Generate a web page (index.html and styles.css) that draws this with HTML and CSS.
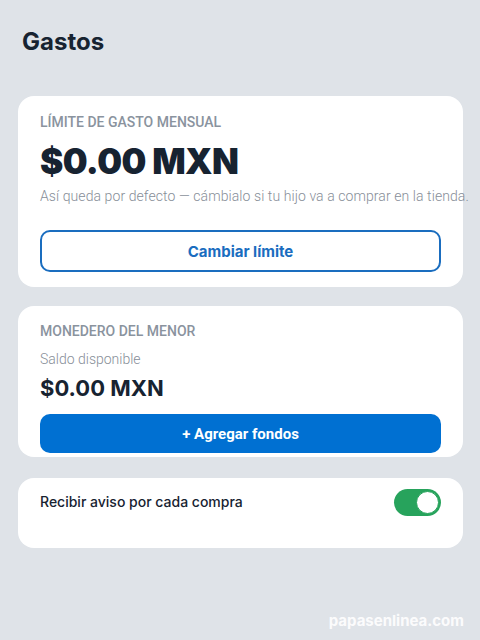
FILE: index.html
```html
<!DOCTYPE html>
<html lang="es">
<head>
    <meta charset="UTF-8">
    <meta name="viewport" content="width=device-width, initial-scale=1.0">
    <title>Gastos</title>
    <link rel="stylesheet" href="styles.css">
</head>
<body>

    <h1 class="page-title">Gastos</h1>

    <!-- Limite mensual -->
    <section class="card card-limit">
        <div class="card-label">LÍMITE DE GASTO MENSUAL</div>
        <div class="amount-big">$0.00 MXN</div>
        <p class="hint">Así queda por defecto — cámbialo si tu hijo va a comprar en la tienda.</p>
        <button class="btn btn-outline">Cambiar límite</button>
    </section>

    <!-- Monedero -->
    <section class="card card-wallet">
        <div class="card-label">MONEDERO DEL MENOR</div>
        <div class="sub-label">Saldo disponible</div>
        <div class="amount">$0.00 MXN</div>
        <button class="btn btn-fill">+ Agregar fondos</button>
    </section>

    <!-- Aviso -->
    <section class="card card-notify">
        <span class="notify-text">Recibir aviso por cada compra</span>
        <span class="toggle on"><span class="knob"></span></span>
    </section>

    <div class="watermark">papasenlinea.com</div>

</body>
</html>
```

FILE: styles.css
```css
body {
    margin: 0;
    padding: 26px 17px 20px 18px;
    background: #dfe3e8;
    font-family: 'Inter', 'Roboto', sans-serif;
    color: #172331;
    height: 640px;
    box-sizing: border-box;
    position: relative;
    overflow: hidden;
}

.page-title {
    font-size: 24px;
    line-height: 32px;
    font-weight: 700;
    margin: 0 0 38px 4px;
    color: #172331;
}

.card {
    background: white;
    border-radius: 16px;
    padding: 17px 22px 15px;
    display: flex;
    flex-direction: column;
}

.card + .card {
    margin-top: 19px;
}

.card-label {
    font-family: 'Roboto', sans-serif;
    font-weight: 500;
    font-size: 14px;
    line-height: 18px;
    color: #8a939e;
}

.amount-big {
    margin-top: 10px;
    font-size: 35px;
    line-height: 40px;
    font-weight: 900;
    letter-spacing: -0.6px;
    color: #172331;
}

.hint {
    margin: 6px -40px 0 0;
    font-family: 'Roboto', sans-serif;
    font-weight: 300;
    font-size: 14px;
    line-height: 18px;
    letter-spacing: 0.08px;
    color: #878e98;
    white-space: nowrap;
}

.btn {
    height: 42px;
    border-radius: 10px;
    font-size: 15px;
    cursor: pointer;
    width: 100%;
}

.btn-outline {
    margin-top: 25px;
    background: white;
    border: 2px solid #1a6dbf;
    color: #1a6dbf;
    font-family: 'Inter', sans-serif;
    font-weight: 700;
}

/* Monedero */
.card-wallet {
    padding-top: 16px;
    padding-bottom: 4px;
}

.sub-label {
    margin-top: 10px;
    font-family: 'Roboto', sans-serif;
    font-weight: 300;
    font-size: 14px;
    line-height: 18px;
    color: #878e98;
}

.amount {
    margin-top: 6px;
    font-size: 22px;
    line-height: 28px;
    font-weight: 700;
    color: #172331;
}

.btn-fill {
    margin-top: 12px;
    height: 39px;
    background: #0070d2;
    border: none;
    color: white;
    font-family: 'Roboto', sans-serif;
    font-weight: 700;
}

/* Aviso */
.card-notify {
    flex-direction: row;
    justify-content: space-between;
    align-items: flex-start;
    padding: 11px 22px;
    min-height: 70px;
    box-sizing: border-box;
}

.card + .card-notify {
    margin-top: 21px;
}

.notify-text {
    font-size: 14px;
    line-height: 20px;
    font-weight: 500;
    color: #172331;
    margin-top: 3px;
}

.toggle {
    width: 47px;
    height: 27px;
    border-radius: 14px;
    background: #27a35c;
    display: flex;
    align-items: center;
    justify-content: flex-end;
    padding: 2px;
    box-sizing: border-box;
}

.knob {
    width: 23px;
    height: 23px;
    border-radius: 50%;
    background: white;
    box-sizing: border-box;
    border: 1px solid #27a35c;
}

.watermark {
    position: absolute;
    right: 16px;
    bottom: 10px;
    color: rgba(255, 255, 255, 0.9);
    font-size: 15px;
    font-weight: 700;
}
```
